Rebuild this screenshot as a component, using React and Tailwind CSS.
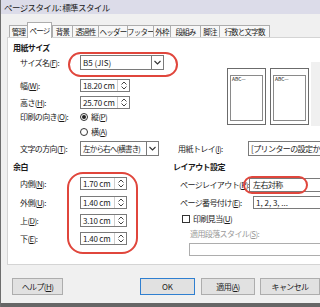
import React from 'react';

const TABS = [
  { name: '管理', w: 'w-[18px]' },
  { name: 'ページ', w: 'w-[25px]', active: true },
  { name: '背景', w: 'w-[20px]' },
  { name: '透過性', w: 'w-[26px]' },
  { name: 'ヘッダー', w: 'w-[29px]' },
  { name: 'フッター', w: 'w-[26px]' },
  { name: '外枠', w: 'w-[17px]' },
  { name: '段組み', w: 'w-[30px]' },
  { name: '脚注', w: 'w-[19px]' },
  { name: '行数と文字数', w: 'w-[51px]' },
];

const Up = () => (
  <svg width="6" height="4" viewBox="0 0 6 4">
    <path d="M0.5 3.5L3 1L5.5 3.5" stroke="#444" strokeWidth="1" fill="none" />
  </svg>
);

const Down = () => (
  <svg width="6" height="4" viewBox="0 0 6 4">
    <path d="M0.5 0.5L3 3L5.5 0.5" stroke="#444" strokeWidth="1" fill="none" />
  </svg>
);

const Spin = ({ value, w }) => (
  <div className={`flex h-[13px] ${w} border border-[#7a7a7a] bg-white`}>
    <div className="flex flex-1 items-center pl-[2px] tracking-[-0.2px]">{value}</div>
    <div className="flex w-[12px] flex-col items-center justify-center gap-[1px] border-l border-[#cfcfcf]">
      <Up />
      <Down />
    </div>
  </div>
);

const Select = ({ children, w }) => (
  <div className={`flex h-[15px] ${w} border border-[#7a7a7a] bg-white`}>
    <div className="flex flex-1 items-center overflow-hidden pl-[2px]">{children}</div>
    <div className="flex w-[12px] shrink-0 items-center justify-center border-l border-[#7a7a7a]">
      <svg width="7" height="5" viewBox="0 0 7 5">
        <path d="M0.5 1L3.5 4L6.5 1" stroke="#333" strokeWidth="1.1" fill="none" />
      </svg>
    </div>
  </div>
);

const Radio = ({ checked, children }) => (
  <div className="flex items-center gap-[3px]">
    <span className="flex h-[8px] w-[8px] items-center justify-center rounded-full border border-[#333] bg-white">
      {checked && <span className="h-[4px] w-[4px] rounded-full bg-[#222]" />}
    </span>
    <span>{children}</span>
  </div>
);

const Preview = () => (
  <div className="mt-[14px] flex h-[57px] w-[39px] shrink-0 border border-[#6b6b6b] bg-white px-[2px] pb-[3px] pt-[6px]">
    <div className="flex-1 border border-[#8a8a8a] pl-[1px] text-[5px] leading-[6px] tracking-normal">ABC—</div>
  </div>
);

const Btn = ({ children, primary, w }) => (
  <div
    className={`flex h-[17px] ${w} items-center justify-center border ${
      primary ? 'border-[#2f7fd0]' : 'border-[#adadad]'
    } bg-[#e1e1e1]`}
  >
    {children}
  </div>
);

export default function App() {
  return (
    <div className="relative flex h-[307px] w-[320px] flex-col overflow-hidden whitespace-nowrap border-l border-[#6e6e6e] bg-[#f0f0f0] font-['Noto_Sans_CJK_JP',sans-serif] text-[8px] leading-none tracking-[-0.6px] text-[#1b1b1b]">
      {/* title bar */}
      <div className="flex h-[14px] shrink-0 items-center bg-[#dcdce9] pl-[3px] text-[8.5px] text-[#222]">
        ページスタイル: 標準スタイル
      </div>

      {/* tabs */}
      <div className="ml-[8px] mt-[9px] flex h-[14px] items-end text-[7.5px] tracking-[-0.8px]">
        {TABS.map((t) =>
          t.active ? (
            <div
              key={t.name}
              className={`relative z-10 -mb-px flex h-[16px] ${t.w} items-center justify-center border border-b-0 border-[#adadad] bg-white`}
            >
              {t.name}
            </div>
          ) : (
            <div
              key={t.name}
              className={`flex h-[12px] ${t.w} items-center justify-center border border-b-0 border-r-0 border-[#adadad] bg-[#f7f7f7] last:border-r`}
            >
              {t.name}
            </div>
          )
        )}
      </div>

      {/* panel */}
      <div className="ml-[6px] h-[228px] w-[330px] shrink-0 overflow-hidden border border-[#d4d4d4] bg-white pl-[5px] pt-[4px]">
        <div className="flex h-[12px] items-center font-bold">用紙サイズ</div>

        <div className="flex">
          <div className="flex w-[214px] shrink-0 flex-col pl-[7px]">
            <div className="mt-[1px] flex h-[15px] items-center">
              <span className="w-[60px] shrink-0">サイズ名(<u>F</u>):</span>
              <Select w="w-[84px]">
                <span className="tracking-normal">B5 (JIS)</span>
              </Select>
            </div>
            <div className="mt-[9px] flex h-[13px] items-center">
              <span className="w-[60px] shrink-0">幅(<u>W</u>):</span>
              <Spin value="18.20 cm" w="w-[50px]" />
            </div>
            <div className="mt-[4px] flex h-[13px] items-center">
              <span className="w-[60px] shrink-0">高さ(<u>H</u>):</span>
              <Spin value="25.70 cm" w="w-[50px]" />
            </div>
            <div className="mt-[2px] flex h-[12px] items-center">
              <span className="w-[60px] shrink-0">印刷の向き(<u>O</u>):</span>
              <Radio checked>
                縦(<u>P</u>)
              </Radio>
            </div>
            <div className="mt-[3px] flex h-[12px] items-center pl-[60px]">
              <Radio>
                横(<u>A</u>)
              </Radio>
            </div>
          </div>
          <div className="flex flex-1 items-start gap-[4px]">
            <Preview />
            <Preview />
            <div className="ml-[-2px] mt-[8px] h-[64px] flex-1 bg-[#f0f0f0]" />
          </div>
        </div>

        <div className="mt-[3px] flex h-[15px] items-center pl-[7px]">
          <span className="w-[60px] shrink-0">文字の方向(<u>T</u>):</span>
          <Select w="w-[81px]">
            <span className="text-[7.5px] tracking-[-0.8px]">左から右へ(横書き)</span>
          </Select>
          <span className="ml-[19px] w-[70px] shrink-0">用紙トレイ(<u>I</u>):</span>
          <div className="flex h-[15px] w-[90px] items-center border border-[#7a7a7a] pl-[2px]">
            [プリンターの設定から]
          </div>
        </div>

        <div className="mt-[5px] flex">
          {/* margins */}
          <div className="flex w-[160px] shrink-0 flex-col">
            <div className="flex h-[12px] items-center font-bold">余白</div>
            <div className="mt-[4px] flex h-[13px] items-center pl-[7px]">
              <span className="w-[60px] shrink-0">内側(<u>N</u>):</span>
              <Spin value="1.70 cm" w="w-[47px]" />
            </div>
            <div className="mt-[6px] flex h-[13px] items-center pl-[7px]">
              <span className="w-[60px] shrink-0">外側(<u>U</u>):</span>
              <Spin value="1.40 cm" w="w-[47px]" />
            </div>
            <div className="mt-[5px] flex h-[13px] items-center pl-[7px]">
              <span className="w-[60px] shrink-0">上(<u>D</u>):</span>
              <Spin value="3.10 cm" w="w-[47px]" />
            </div>
            <div className="mt-[5px] flex h-[13px] items-center pl-[7px]">
              <span className="w-[60px] shrink-0">下(<u>E</u>):</span>
              <Spin value="1.40 cm" w="w-[47px]" />
            </div>
          </div>

          {/* layout settings */}
          <div className="flex flex-1 flex-col">
            <div className="flex h-[12px] items-center font-bold">レイアウト設定</div>
            <div className="mt-[5px] flex h-[14px] items-center pl-[7px]">
              <span className="w-[69px] shrink-0">ページレイアウト(<u>P</u>):</span>
              <div className="flex h-[14px] w-[90px] items-center border border-[#7a7a7a] pl-[3px]">左右対称</div>
            </div>
            <div className="mt-[4px] flex h-[13px] items-center pl-[7px]">
              <span className="w-[73px] shrink-0">ページ番号付け(<u>E</u>):</span>
              <div className="flex h-[13px] w-[90px] items-center border border-[#7a7a7a] pl-[2px] tracking-normal">
                1, 2, 3, ...
              </div>
            </div>
            <div className="mt-[5px] flex h-[10px] items-center gap-[3px] pl-[9px]">
              <span className="h-[8px] w-[8px] border border-[#333] bg-white" />
              <span>印刷見当(<u>U</u>)</span>
            </div>
            <div className="mt-[4px] flex h-[11px] items-center pl-[17px] text-[#9a9a9a]">
              適用段落スタイル(<u>S</u>):
            </div>
            <div className="ml-[16px] mt-[4px] h-[13px] w-[150px] border border-[#adadad]" />
          </div>
        </div>
      </div>

      {/* buttons */}
      <div className="mt-[13px] flex h-[17px] items-center pl-[11px]">
        <Btn w="w-[55px]">
          ヘルプ(<u>H</u>)
        </Btn>
        <div className="ml-[77px]">
          <Btn primary w="w-[55px]">
            <span className="tracking-normal">OK</span>
          </Btn>
        </div>
        <div className="ml-[6px]">
          <Btn w="w-[54px]">
            適用(<u>A</u>)
          </Btn>
        </div>
        <div className="ml-[5px]">
          <Btn w="w-[60px]">キャンセル</Btn>
        </div>
      </div>

      <div className="mt-auto h-[4px] shrink-0 bg-[#666]" />

      {/* red highlight marks */}
      <div className="absolute left-[67px] top-[52px] h-[25px] w-[110px] rounded-[13px] border-2 border-[#e0463c]" />
      <div className="absolute left-[66px] top-[172px] h-[82px] w-[71px] rounded-[16px] border-2 border-[#e0463c]" />
      <div className="absolute left-[242px] top-[176px] h-[18px] w-[65px] rounded-[9px] border-2 border-[#e0463c]" />
    </div>
  );
}
